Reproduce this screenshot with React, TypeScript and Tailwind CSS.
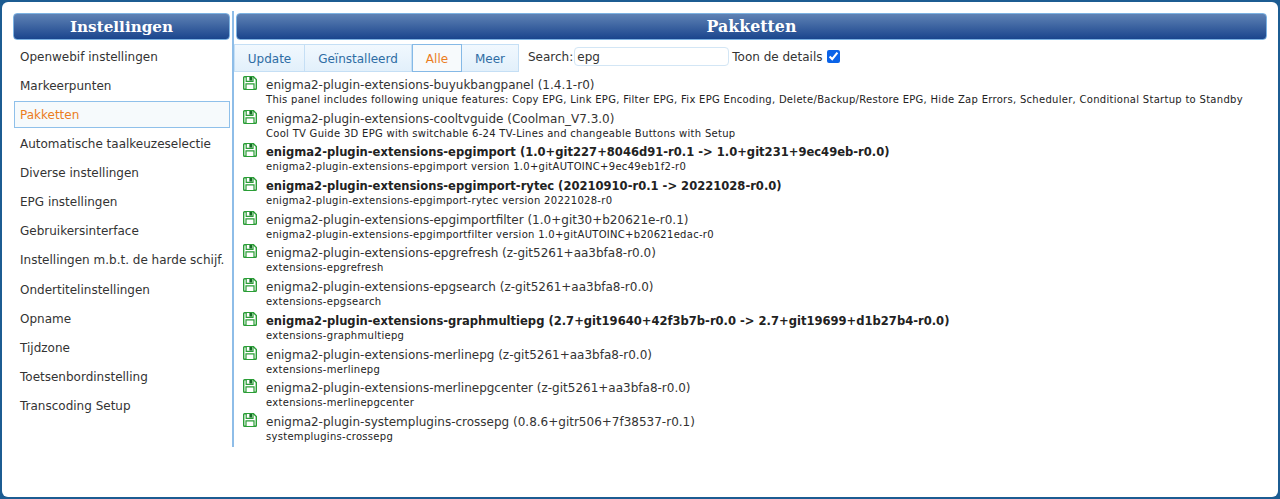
const verdana = "font-['DejaVu_Sans',sans-serif]";

const menu = [
  "Openwebif instellingen",
  "Markeerpunten",
  "Pakketten",
  "Automatische taalkeuzeselectie",
  "Diverse instellingen",
  "EPG instellingen",
  "Gebruikersinterface",
  "Instellingen m.b.t. de harde schijf.",
  "Ondertitelinstellingen",
  "Opname",
  "Tijdzone",
  "Toetsenbordinstelling",
  "Transcoding Setup",
];

const packages: [string, string, boolean][] = [
  ["enigma2-plugin-extensions-buyukbangpanel (1.4.1-r0)", "This panel includes following unique features: Copy EPG, Link EPG, Filter EPG, Fix EPG Encoding, Delete/Backup/Restore EPG, Hide Zap Errors, Scheduler, Conditional Startup to Standby", false],
  ["enigma2-plugin-extensions-cooltvguide (Coolman_V7.3.0)", "Cool TV Guide 3D EPG with switchable 6-24 TV-Lines and changeable Buttons with Setup", false],
  ["enigma2-plugin-extensions-epgimport (1.0+git227+8046d91-r0.1 -> 1.0+git231+9ec49eb-r0.0)", "enigma2-plugin-extensions-epgimport version 1.0+gitAUTOINC+9ec49eb1f2-r0", true],
  ["enigma2-plugin-extensions-epgimport-rytec (20210910-r0.1 -> 20221028-r0.0)", "enigma2-plugin-extensions-epgimport-rytec version 20221028-r0", true],
  ["enigma2-plugin-extensions-epgimportfilter (1.0+git30+b20621e-r0.1)", "enigma2-plugin-extensions-epgimportfilter version 1.0+gitAUTOINC+b20621edac-r0", false],
  ["enigma2-plugin-extensions-epgrefresh (z-git5261+aa3bfa8-r0.0)", "extensions-epgrefresh", false],
  ["enigma2-plugin-extensions-epgsearch (z-git5261+aa3bfa8-r0.0)", "extensions-epgsearch", false],
  ["enigma2-plugin-extensions-graphmultiepg (2.7+git19640+42f3b7b-r0.0 -> 2.7+git19699+d1b27b4-r0.0)", "extensions-graphmultiepg", true],
  ["enigma2-plugin-extensions-merlinepg (z-git5261+aa3bfa8-r0.0)", "extensions-merlinepg", false],
  ["enigma2-plugin-extensions-merlinepgcenter (z-git5261+aa3bfa8-r0.0)", "extensions-merlinepgcenter", false],
  ["enigma2-plugin-systemplugins-crossepg (0.8.6+gitr506+7f38537-r0.1)", "systemplugins-crossepg", false],
];

function Floppy() {
  return (
    <svg width="14" height="14" viewBox="0 0 14 14" className="shrink-0">
      <path d="M1.5 0.7H10.5L13.3 3.5V12.5a.8 .8 0 0 1-.8 .8h-11a.8 .8 0 0 1-.8-.8v-11a.8 .8 0 0 1 .8-.8z" fill="#fff" stroke="#2a9d36" strokeWidth="1.4" />
      <path d="M3.2 1V5.4H10V1" fill="#fff" stroke="#2a9d36" strokeWidth="1.2" />
      <rect x="6.4" y="1" width="2.6" height="3.6" fill="#156b25" />
      <path d="M3 13V7.8H11V13" fill="#fff" stroke="#2a9d36" strokeWidth="1.2" />
    </svg>
  );
}

function Tab({ label, active, w }: { label: string; active?: boolean; w: string }) {
  return (
    <div
      className={`${w} h-[28px] pt-[1px] flex items-center justify-center text-[12px] border-y border-r first:border-l ${
        active
          ? "text-[#eb7d1e] bg-[#f7fafc] border border-[#85b9e6]"
          : "text-[#2e6da4] border-[#c5dff5] bg-gradient-to-b from-[#f1f8fe] to-[#e2f0fb]"
      }`}
    >
      {label}
    </div>
  );
}

export default function App() {
  return (
    <div className="h-[499px] w-[1280px] bg-[#1c5c92] p-[2px] overflow-hidden">
      <div className={`${verdana} h-full bg-white rounded-[6px] pt-[11px] pl-[11px] pr-[11px] flex text-[#333]`}>
        <div className="w-[217px] shrink-0">
          <div className="h-[27px] pt-[1px] rounded-[4px] border border-[#7cb2e2] bg-gradient-to-b from-[#5f82b4] to-[#1a458d] flex items-center justify-center text-white font-bold text-[15.2px] font-['DejaVu_Serif',serif]">
            Instellingen
          </div>
          <div className="mt-[3px] flex flex-col">
            {menu.map((m) => (
              <div
                key={m}
                className={`h-[27px] mb-[2.15px] flex items-center pl-[5px] text-[12px] ml-[1px] border whitespace-nowrap ${
                  m === "Pakketten"
                    ? "text-[#eb7d1e] bg-[#f6fafc] border-[#8fc0ea]"
                    : "border-transparent"
                }`}
              >
                {m}
              </div>
            ))}
          </div>
        </div>
        <div className="ml-[2px] w-[2px] h-[436px] bg-[#8ebde8] mr-[2px] -mt-[2px] shrink-0" />
        <div className="flex-1 min-w-0">
          <div className="h-[27px] pt-[1px] rounded-[4px] border border-[#7cb2e2] bg-gradient-to-b from-[#5f82b4] to-[#1a458d] flex items-center justify-center text-white font-bold text-[15.8px] font-['DejaVu_Serif',serif]">
            Pakketten
          </div>
          <div className="flex items-center h-[28px] mt-[4px] -ml-[2px]">
            <Tab label="Update" w="w-[71px]" />
            <Tab label="Geïnstalleerd" w="w-[107px]" />
            <Tab label="Alle" active w="w-[50px]" />
            <Tab label="Meer" w="w-[57px]" />
            <span className="ml-[9px] text-[12px] -mt-[3px]">Search:</span>
            <input
              readOnly
              value="epg"
              className="ml-[1px] w-[155px] h-[19px] rounded-[4px] border border-[#d3e6f5] pl-[2px] text-[12px] text-[#333] outline-none -mt-[3px]"
            />
            <span className="ml-[3px] text-[12px] -mt-[3px]">Toon de details</span>
            <input type="checkbox" readOnly checked className="ml-[5px] w-[13px] h-[13px] accent-[#0a63e8] -mt-[3px]" />
          </div>
          <div className="mt-[2px] pl-[7px]">
            {packages.map(([t, d, b]) => (
              <div key={t} className="flex gap-[9px] h-[33.7px]">
                <div className="pt-[2px]"><Floppy /></div>
                <div className="min-w-0 pt-[3px]">
                  <div className={`leading-[16px] whitespace-nowrap ${b ? "font-bold text-[#222] text-[11.55px]" : "text-[12px]"}`}>{t}</div>
                  <div className="text-[10px] tracking-[0.29px] leading-[12px] mt-[1px] whitespace-nowrap text-[#222]">{d}</div>
                </div>
              </div>
            ))}
          </div>
        </div>
      </div>
    </div>
  );
}
